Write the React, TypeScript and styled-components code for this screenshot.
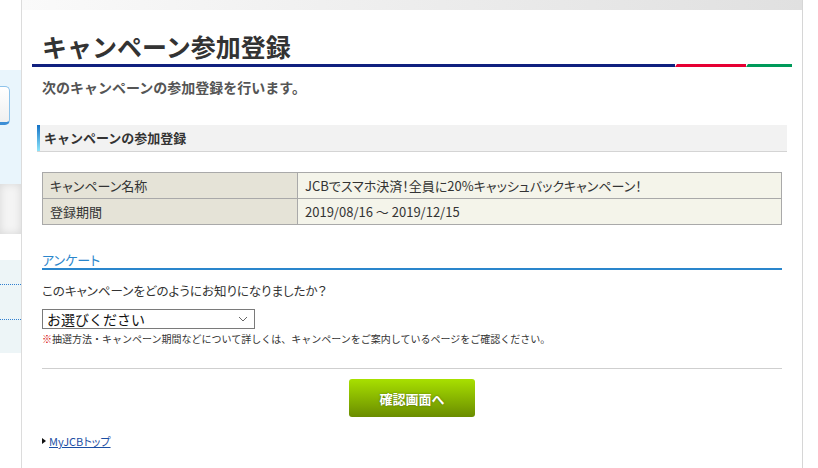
import styled, { createGlobalStyle } from 'styled-components';

const GlobalStyle = createGlobalStyle`
  html, body {
    margin: 0;
    padding: 0;
    background: #fff;
  }
  body {
    font-family: 'Noto Sans CJK JP', 'Liberation Sans', sans-serif;
    color: #333;
  }
`;

const Page = styled.div`
  display: flex;
  align-items: stretch;
  min-height: 468px;
`;

const Sidebar = styled.div`
  width: 21px;
  border-right: 1px solid #dcdcdc;
  display: flex;
  flex-direction: column;
  padding-top: 70px;
  box-sizing: content-box;
`;

const SideInfo = styled.div`
  height: 114px;
  background: #e9f5fc;
  padding-top: 16px;
  box-sizing: border-box;
`;

const SideButton = styled.div`
  width: 9px;
  height: 35px;
  background: linear-gradient(#fff, #f0f0f0);
  border: 1px solid #8ec3ea;
  border-left: none;
  border-bottom: 3px solid #3d8fd6;
  border-radius: 0 5px 5px 0;
`;

const SideShade = styled.div`
  height: 50px;
  background: #f4f4f4;
  box-shadow: inset 0 0 8px rgba(0, 0, 0, 0.12);
`;

const SideMenu = styled.div`
  margin-top: 26px;
  height: 93px;
  background: #edf5f7;
  padding-top: 24px;
  box-sizing: border-box;
`;

const SideMenuItem = styled.div`
  height: 34px;
  border-top: 1px dotted #2f7fd0;
`;

const Main = styled.div`
  width: 780px;
  border-right: 1px solid #d6d6d6;
  display: flex;
  flex-direction: column;
`;

const TopBar = styled.div`
  height: 10px;
  background: linear-gradient(to right, #fafafa, #e0e0e0);
`;

const TitleArea = styled.div`
  padding: 0 10px;
`;

const Title = styled.h1`
  margin: 21px 0 0;
  padding: 0 10px 2px;
  font-size: 25px;
  line-height: 31px;
  font-weight: bold;
  color: #333;
`;

const ColorLine = styled.div`
  display: flex;
  height: 3px;
`;

const LineSegment = styled.span<{ $color: string; $width?: number; $slant?: boolean }>`
  display: block;
  background: ${(p) => p.$color};
  ${(p) => (p.$width ? `width: ${p.$width}px;` : 'flex: 1;')}
  ${(p) => (p.$slant ? 'clip-path: polygon(3px 0, 100% 0, 100% 100%, 1px 100%); margin-left: -1px;' : '')}
`;

const Content = styled.div`
  padding: 0 20px;
  display: flex;
  flex-direction: column;
`;

const Lead = styled.p`
  margin: 10px 0 0;
  font-size: 14px;
  line-height: 20px;
  font-weight: bold;
  color: #555;
`;

const SectionHead = styled.h2`
  margin: 28px -5px 0;
  height: 26px;
  background: #f2f2f2;
  border-bottom: 1px solid #d4d4d4;
  position: relative;
  padding-left: 7px;
  font-size: 13px;
  line-height: 26px;
  font-weight: bold;
  color: #333;

  &::before {
    content: '';
    position: absolute;
    left: 0;
    top: 0;
    width: 3px;
    height: 26px;
    background: linear-gradient(#1472c6, #8ee6fb);
  }
`;

const InfoTable = styled.table`
  margin-top: 20px;
  width: 100%;
  border-collapse: collapse;
  font-size: 13px;
  font-feature-settings: 'palt';
  color: #333;

  th, td {
    border: 1px solid #a9a9a9;
    height: 25px;
    padding: 0 7px;
    text-align: left;
    font-weight: normal;
  }
  th {
    width: 240px;
    background: #e5e3d7;
  }
  td {
    background: #f4f4ea;
  }
`;

const SubHead = styled.h3`
  margin: 27px 0 0;
  font-size: 13px;
  line-height: 16px;
  font-weight: normal;
  font-feature-settings: 'palt';
  color: #2a86cc;
  border-bottom: 2px solid #2a86cc;
`;

const Question = styled.p`
  margin: 12px 0 0;
  font-size: 12.5px;
  line-height: 18px;
  font-feature-settings: 'palt';
`;

const SelectBox = styled.div`
  margin-top: 9px;
  width: 213px;
  height: 20px;
  box-sizing: border-box;
  border: 1px solid #7a7a7a;
  display: flex;
  align-items: center;
  justify-content: space-between;
  padding: 0 6px 0 4px;
  font-size: 14px;
  color: #111;
  background: #fff;
`;

const Note = styled.p`
  margin: 3px 0 0;
  font-size: 10px;
  line-height: 14px;
  color: #333;

  span {
    color: #d40000;
  }
`;

const Divider = styled.hr`
  margin: 22px 0 0;
  border: none;
  border-top: 1px solid #cfcfcf;
`;

const Actions = styled.div`
  margin-top: 10px;
  display: flex;
  justify-content: center;
`;

const ConfirmButton = styled.button`
  width: 126px;
  height: 38px;
  border: none;
  border-radius: 3px;
  background: linear-gradient(#a8e000, #6a8c00);
  color: #fff;
  font-family: inherit;
  font-size: 13px;
  font-weight: bold;
  text-shadow: 0 0 2px rgba(40, 60, 0, 0.6);
  cursor: pointer;
`;

const BackLink = styled.a`
  margin-top: 17px;
  display: flex;
  align-items: center;
  gap: 3px;
  font-size: 11px;
  line-height: 14px;
  font-feature-settings: 'palt';
  color: #1b4ea3;
  text-decoration: underline;

  &::before {
    content: '';
    border-left: 4px solid #111;
    border-top: 3px solid transparent;
    border-bottom: 3px solid transparent;
  }
`;

const Chevron = () => (
  <svg width="10" height="6" viewBox="0 0 10 6" fill="none">
    <path d="M1 1l4 4 4-4" stroke="#666" strokeWidth="1" />
  </svg>
);

const App = () => {
  return (
    <>
      <GlobalStyle />
      <Page>
        <Sidebar>
          <SideInfo>
            <SideButton />
          </SideInfo>
          <SideShade />
          <SideMenu>
            <SideMenuItem />
            <SideMenuItem />
          </SideMenu>
        </Sidebar>
        <Main>
          <TopBar />
          <TitleArea>
            <Title>キャンペーン参加登録</Title>
            <ColorLine>
              <LineSegment $color="#10207f" />
              <LineSegment $color="#e60033" $width={72} $slant />
              <LineSegment $color="#009a5a" $width={47} $slant />
            </ColorLine>
          </TitleArea>
          <Content>
            <Lead>次のキャンペーンの参加登録を行います。</Lead>
            <SectionHead>キャンペーンの参加登録</SectionHead>
            <InfoTable>
              <tbody>
                <tr>
                  <th>キャンペーン名称</th>
                  <td>JCBでスマホ決済！全員に20%キャッシュバックキャンペーン！</td>
                </tr>
                <tr>
                  <th>登録期間</th>
                  <td>2019/08/16 〜 2019/12/15</td>
                </tr>
              </tbody>
            </InfoTable>
            <SubHead>アンケート</SubHead>
            <Question>このキャンペーンをどのようにお知りになりましたか？</Question>
            <SelectBox>
              お選びください
              <Chevron />
            </SelectBox>
            <Note>
              <span>※</span>抽選方法・キャンペーン期間などについて詳しくは、キャンペーンをご案内しているページをご確認ください。
            </Note>
            <Divider />
            <Actions>
              <ConfirmButton>確認画面へ</ConfirmButton>
            </Actions>
            <div>
              <BackLink href="#">MyJCBトップ</BackLink>
            </div>
          </Content>
        </Main>
      </Page>
    </>
  );
};

export default App;
